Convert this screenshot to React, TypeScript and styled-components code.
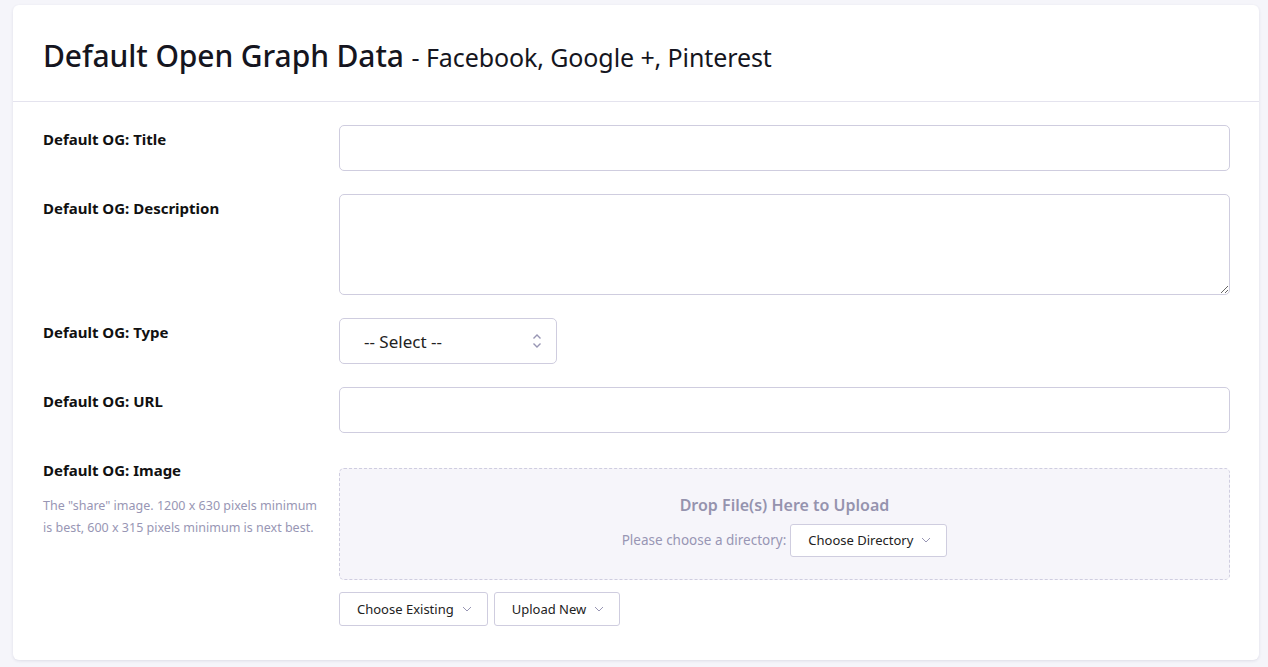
import React from "react";
import styled, { createGlobalStyle } from "styled-components";

const GlobalStyle = createGlobalStyle`
  html, body {
    margin: 0;
    padding: 0;
    background: #f5f5fa;
    font-family: "Noto Sans", "Open Sans", sans-serif;
    color: #111;
  }
  * { box-sizing: border-box; }
`;

const Page = styled.div`
  padding: 5px 9px 6px 13px;
`;

const Card = styled.div`
  background: #fff;
  border-radius: 6px;
  box-shadow: 0 1px 3px rgba(60, 60, 100, 0.12);
`;

const Header = styled.div`
  height: 97px;
  padding: 4px 30px 0;
  display: flex;
  align-items: center;
  border-bottom: 1px solid #e4e3ee;
`;

const Title = styled.h1`
  margin: 0;
  font-size: 30px;
  font-weight: 500;
  color: #151520;
  letter-spacing: -0.1px;
`;

const Sub = styled.span`
  font-size: 25px;
  font-weight: 400;
`;

const Body = styled.div`
  padding: 23px 29px 34px 30px;
  display: flex;
  flex-direction: column;
  gap: 23px;
`;

const Row = styled.div`
  display: grid;
  grid-template-columns: 296px 1fr;
`;

const LabelCol = styled.div`
  padding-top: 4px;
`;

const Label = styled.div`
  font-size: 15px;
  font-weight: 700;
  color: #111;
  line-height: 20px;
`;

const Help = styled.div`
  margin-top: 15px;
  font-size: 12.5px;
  line-height: 22px;
  color: #9896b4;
  width: 285px;
`;

const Input = styled.input`
  width: 100%;
  height: 46px;
  border: 1px solid #cfcddf;
  border-radius: 5px;
  outline: none;
  font: inherit;
  display: block;
`;

const TextArea = styled.textarea`
  width: 100%;
  height: 101px;
  border: 1px solid #cfcddf;
  border-radius: 5px;
  outline: none;
  font: inherit;
  display: block;
  resize: vertical;
`;

const SelectBox = styled.div`
  width: 218px;
  height: 46px;
  border: 1px solid #cfcddf;
  border-radius: 5px;
  display: flex;
  align-items: center;
  justify-content: space-between;
  padding: 0 14px 0 24px;
  font-size: 17px;
  color: #222;
`;

const Drop = styled.div`
  margin-top: 12px;
  height: 112px;
  border: 1px dashed #cfcde0;
  border-radius: 5px;
  background: #f6f5fa;
  display: flex;
  flex-direction: column;
  align-items: center;
  justify-content: center;
  gap: 8px;
  padding-top: 2px;
`;

const DropTitle = styled.div`
  font-size: 16px;
  font-weight: 600;
  color: #9593ae;
`;

const DirLine = styled.div`
  display: flex;
  align-items: center;
  gap: 4px;
  font-size: 13.5px;
  color: #9896b4;
`;

const Btn = styled.button`
  height: 33px;
  padding: 0 15px 0 17px;
  border: 1px solid #cfcddf;
  border-radius: 3px;
  background: #fff;
  font-family: inherit;
  font-size: 13px;
  color: #222;
  display: inline-flex;
  align-items: center;
  gap: 8px;
  cursor: pointer;
`;

const BtnRow = styled.div`
  display: flex;
  gap: 6px;
  margin-top: 12px;

  ${Btn} {
    height: 34px;
  }
`;

const Chevron = () => (
  <svg width="10" height="6" viewBox="0 0 10 6" fill="none">
    <path d="M1 1l4 4 4-4" stroke="#9896b4" strokeWidth="1" />
  </svg>
);

const UpDown = () => (
  <svg width="10" height="16" viewBox="0 0 10 16" fill="none">
    <path d="M1.5 5.5L5 2l3.5 3.5M1.5 10.5L5 14l3.5-3.5" stroke="#9896b4" strokeWidth="1.4" />
  </svg>
);

const App = () => (
  <>
    <GlobalStyle />
    <Page>
      <Card>
        <Header>
          <Title>
            Default Open Graph Data <Sub>- Facebook, Google +, Pinterest</Sub>
          </Title>
        </Header>
        <Body>
          <Row>
            <LabelCol><Label>Default OG: Title</Label></LabelCol>
            <Input />
          </Row>
          <Row>
            <LabelCol><Label>Default OG: Description</Label></LabelCol>
            <TextArea />
          </Row>
          <Row>
            <LabelCol><Label>Default OG: Type</Label></LabelCol>
            <SelectBox>
              <span>-- Select --</span>
              <UpDown />
            </SelectBox>
          </Row>
          <Row>
            <LabelCol><Label>Default OG: URL</Label></LabelCol>
            <Input />
          </Row>
          <Row>
            <LabelCol>
              <Label>Default OG: Image</Label>
              <Help>
                The "share" image. 1200 x 630 pixels minimum is best, 600 x 315 pixels minimum is next best.
              </Help>
            </LabelCol>
            <div>
              <Drop>
                <DropTitle>Drop File(s) Here to Upload</DropTitle>
                <DirLine>
                  Please choose a directory:
                  <Btn>Choose Directory <Chevron /></Btn>
                </DirLine>
              </Drop>
              <BtnRow>
                <Btn>Choose Existing <Chevron /></Btn>
                <Btn>Upload New <Chevron /></Btn>
              </BtnRow>
            </div>
          </Row>
        </Body>
      </Card>
    </Page>
  </>
);

export default App;
